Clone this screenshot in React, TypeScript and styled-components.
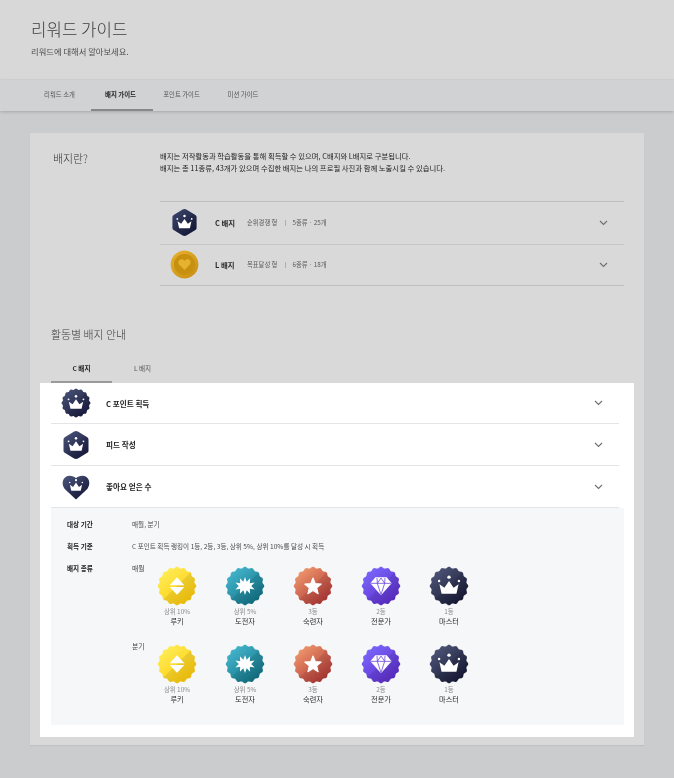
import React, { useId } from 'react'
import styled, { createGlobalStyle } from 'styled-components'

const GlobalStyle = createGlobalStyle`
  html, body {
    margin: 0;
    padding: 0;
    background: #cbccce;
  }
  body {
    font-family: "Noto Sans CJK KR", "Noto Sans", "Liberation Sans", sans-serif;
    color: #222;
  }
  * { box-sizing: border-box; }
`

const Page = styled.div`
  width: 674px;
  height: 778px;
  overflow: hidden;
  background: #cbccce;
  filter: blur(0.45px);
`

const TopHeader = styled.header`
  height: 80px;
  padding: 17px 31px 0;
  background: #d8d8d8;
  border-bottom: 1px solid #d3d3d3;
`

const PageTitle = styled.h1`
  margin: 0;
  font-size: 16.8px;
  line-height: 24px;
  font-weight: 300;
  color: #3b3b3b;
`

const PageSub = styled.p`
  margin: 3px 0 0;
  font-size: 8.3px;
  line-height: 14px;
  color: #4c4c4c;
`

const TabBar = styled.nav`
  height: 31px;
  padding-left: 28px;
  display: flex;
  background: #d1d2d4;
  box-shadow: 0 1px 3px rgba(0, 0, 0, 0.18);
`

const TopTab = styled.div<{ $active?: boolean; $w: number }>`
  width: ${p => p.$w}px;
  display: flex;
  align-items: center;
  justify-content: center;
  padding-right: ${p => (p.$active ? 3 : 0)}px;
  font-size: 6.4px;
  color: ${p => (p.$active ? '#1d1d1d' : '#555')};
  font-weight: ${p => (p.$active ? 700 : 400)};
  border-bottom: 2px solid ${p => (p.$active ? '#86888a' : 'transparent')};
`

const Card = styled.main`
  margin: 22px 30px 0;
  height: 612px;
  padding: 17px 10px 8px 10px;
  background: #d9d9d9;
  box-shadow: 0 1px 1px rgba(0, 0, 0, 0.05);
`

const Intro = styled.section`
  display: grid;
  grid-template-columns: 107px 464px;
  padding: 0 0 0 13px;
  height: 136px;
`

const IntroTitle = styled.h2`
  margin: 0;
  font-size: 10.9px;
  line-height: 16px;
  font-weight: 300;
  color: #333;
`

const IntroText = styled.p`
  margin: 0;
  font-size: 7.35px;
  line-height: 12px;
  color: #222;
`

const TypeList = styled.div`
  margin-top: 27px;
  border-top: 1px solid #bfbfbf;
  border-bottom: 1px solid #bfbfbf;
  grid-column: 2;
`

const TypeRow = styled.div`
  height: 41.5px;
  display: flex;
  align-items: center;
  padding: 0 16px 0 10px;
  & + & { border-top: 1px solid #c6c6c6; }
`

const TypeName = styled.strong`
  margin-left: 16px;
  width: 32px;
  font-size: 7.4px;
  font-weight: 700;
  color: #2a2a2a;
`

const TypeMeta = styled.span`
  font-size: 6.3px;
  color: #5a5a5a;
`

const MetaDivider = styled.i`
  width: 1px;
  height: 6px;
  margin: 0 6px 0 8px;
  background: #b0b0b0;
`

const Chevron = styled.svg`
  margin-left: auto;
  width: 9px;
  height: 6px;
  flex: none;
`

const SectionTitle = styled.h2`
  margin: 40px 0 0 11px;
  font-size: 10.9px;
  line-height: 16px;
  font-weight: 300;
  color: #3a3a3a;
`

const SubTabs = styled.div`
  display: flex;
  margin: 16px 10px 0 11px;
  height: 25px;
`

const SubTab = styled.div<{ $active?: boolean }>`
  width: 61px;
  padding-bottom: 3px;
  display: flex;
  align-items: center;
  justify-content: center;
  font-size: 6.6px;
  color: ${p => (p.$active ? '#1d1d1d' : '#555')};
  font-weight: ${p => (p.$active ? 700 : 400)};
  border-bottom: 2px solid ${p => (p.$active ? '#9a9a9a' : 'transparent')};
`

const Spotlight = styled.section`
  background: #fff;
  height: 354px;
  padding: 0 10px 0 11px;
`

const ActivityList = styled.div`
  margin-right: 5px;
`

const ActivityRow = styled.div`
  height: 42px;
  display: flex;
  align-items: center;
  padding: 0 16px 0 10px;
  border-bottom: 1.5px solid #e4e5e9;
  &:first-child { height: 41px; }
`

const ActivityName = styled.strong`
  margin-left: 15px;
  font-size: 7.6px;
  font-weight: 700;
  color: #222;
`

const Detail = styled.div`
  height: 217px;
  padding: 10px 0 0 16px;
  background: #f6f7f9;
`

const InfoRow = styled.div<{ $h: number }>`
  display: grid;
  grid-template-columns: 65px 1fr;
  min-height: ${p => p.$h}px;
  align-items: start;
`

const InfoLabel = styled.div`
  font-size: 6.6px;
  line-height: 12px;
  font-weight: 700;
  color: #222;
`

const InfoValue = styled.div`
  font-size: 6.6px;
  line-height: 12px;
  color: #4a4a4a;
`

const BadgeGroup = styled.div`
  display: grid;
  grid-template-columns: 11px repeat(5, 68px);
  height: 78px;
`

const Period = styled.div`
  font-size: 6.8px;
  line-height: 12px;
  white-space: nowrap;
  color: #444;
`

const BadgeItem = styled.div`
  padding-top: 4px;
  display: flex;
  flex-direction: column;
  align-items: center;
`

const BadgeCaption = styled.span`
  margin-top: 1px;
  font-size: 6.4px;
  line-height: 10px;
  color: #8a8a8a;
`

const BadgeName = styled.span`
  font-size: 7.2px;
  line-height: 9.5px;
  color: #2a2a2a;
`

type Glyph = 'rookie' | 'burst' | 'star' | 'gem' | 'crown' | 'heart'
type Shape = 'scallop' | 'hex' | 'heart' | 'coin'

const scallopPath = (bumps = 16, r = 22.2, amp = 0.9) => {
  const pts: string[] = []
  for (let i = 0; i < 192; i++) {
    const a = (i / 192) * Math.PI * 2
    const rad = r + amp * Math.cos(a * bumps)
    pts.push(`${(24 + rad * Math.cos(a)).toFixed(2)} ${(24 + rad * Math.sin(a)).toFixed(2)}`)
  }
  return `M${pts.join('L')}Z`
}

const shapes: Record<Shape, string> = {
  scallop: scallopPath(),
  hex: 'M24 1.5 Q25.5 1.5 27 2.5 L42 11.5 Q44 13 44 15 V33 Q44 35 42 36.5 L27 45.5 Q24 47 21 45.5 L6 36.5 Q4 35 4 33 V15 Q4 13 6 11.5 L21 2.5 Q22.5 1.5 24 1.5Z',
  heart: 'M24 44 L6 27 C0 20 2 7 13 6 C18 6 22 8 24 10 C26 8 30 6 35 6 C46 7 48 20 42 27Z',
  coin: 'M24 1a23 23 0 1 0 0.01 0Z',
}

const glyphScale: Record<Glyph, number> = {
  rookie: 0.8,
  burst: 0.68,
  star: 0.64,
  gem: 0.8,
  crown: 0.85,
  heart: 1,
}

const Glyphs: React.FC<{ kind: Glyph }> = ({ kind }) => {
  switch (kind) {
    case 'rookie':
      return (
        <g fill="#fff">
          <path d="M24 11 L35 23 H13Z" />
          <path d="M13 25.5 H35 L24 37Z" />
        </g>
      )
    case 'burst':
      return (
        <path
          fill="#fff"
          d="M24 8 L27 16.5 L33 10.5 L32.5 19 L41 18 L35 24 L41 30 L32.5 29 L33 37.5 L27 31.5 L24 40 L21 31.5 L15 37.5 L15.5 29 L7 30 L13 24 L7 18 L15.5 19 L15 10.5 L21 16.5Z"
        />
      )
    case 'star':
      return <path fill="#fff" stroke="#fff" strokeWidth="2" strokeLinejoin="round" d="M24 9 L28.4 19.6 L39.5 20.4 L31 27.6 L33.7 38.6 L24 32.6 L14.3 38.6 L17 27.6 L8.5 20.4 L19.6 19.6Z" />
    case 'gem':
      return (
        <g>
          <path fill="#fff" d="M15.5 11 H32.5 L40 20 L24 38 L8 20Z" />
          <path fill="none" stroke="#6a45d8" strokeWidth="1.2" d="M8.5 20 H39.5 M18 12 L18.5 20 L24 37 L29.5 20 L30 12 M18.5 20 L24 12 L29.5 20" />
        </g>
      )
    case 'crown':
      return (
        <g fill="#fff">
          <circle cx="24" cy="11.5" r="2.4" />
          <circle cx="10" cy="17" r="1.7" />
          <circle cx="38" cy="17" r="1.7" />
          <path d="M10.5 21.5 L17.5 26.5 L24 17 L30.5 26.5 L37.5 21.5 L34.5 35 H13.5Z" />
        </g>
      )
    case 'heart':
      return <path fill="#e5b32d" d="M24 33 L15.5 24.5 C12.5 21 14 16 18.5 15.5 C21 15.3 23 16.5 24 18 C25 16.5 27 15.3 29.5 15.5 C34 16 35.5 21 32.5 24.5Z" />
  }
}

const Badge: React.FC<{
  size: number
  shape: Shape
  glyph: Glyph
  from: string
  to: string
  ring?: string
}> = ({ size, shape, glyph, from, to, ring }) => {
  const id = useId().replace(/[^a-zA-Z0-9]/g, '')
  const scale = shape === 'heart' ? 0.72 : glyphScale[glyph]
  return (
    <svg width={size} height={size} viewBox="0 0 48 48" style={{ flex: 'none' }}>
      <defs>
        <linearGradient id={`g${id}`} x1="0.1" y1="0" x2="0.9" y2="1">
          <stop offset="0" stopColor={from} />
          <stop offset="1" stopColor={to} />
        </linearGradient>
        <clipPath id={`c${id}`}>
          <path d={shapes[shape]} />
        </clipPath>
      </defs>
      <path d={shapes[shape]} fill={`url(#g${id})`} />
      {ring ? (
        <circle cx="24" cy="24" r="17.5" fill={ring} />
      ) : (
        <path d="M0 48 L48 0 V48Z" fill="#000" opacity="0.08" clipPath={`url(#c${id})`} />
      )}
      <g transform={`translate(24 ${shape === 'heart' ? 22 : 24}) scale(${scale}) translate(-24 -24)`}>
        <Glyphs kind={glyph} />
      </g>
    </svg>
  )
}

const ChevronIcon = () => (
  <Chevron viewBox="0 0 9 6">
    <path d="M1 1 L4.5 4.5 L8 1" fill="none" stroke="#6e6e6e" strokeWidth="1.1" />
  </Chevron>
)

const navy = { from: '#4a5478', to: '#14163a' }

const tiers: { glyph: Glyph; from: string; to: string; caption: string; name: string }[] = [
  { glyph: 'rookie', from: '#fff060', to: '#fcc600', caption: '상위 10%', name: '루키' },
  { glyph: 'burst', from: '#49bcd4', to: '#0c6a7c', caption: '상위 5%', name: '도전자' },
  { glyph: 'star', from: '#f5a172', to: '#a92c30', caption: '3등', name: '숙련자' },
  { glyph: 'gem', from: '#7c6cff', to: '#5a26c4', caption: '2등', name: '전문가' },
  { glyph: 'crown', from: '#525a7c', to: '#12132f', caption: '1등', name: '마스터' },
]

const BadgeRow: React.FC<{ period: string }> = ({ period }) => (
  <BadgeGroup>
    <Period>{period}</Period>
    {tiers.map(t => (
      <BadgeItem key={t.name}>
        <Badge size={40} shape="scallop" glyph={t.glyph} from={t.from} to={t.to} />
        <BadgeCaption>{t.caption}</BadgeCaption>
        <BadgeName>{t.name}</BadgeName>
      </BadgeItem>
    ))}
  </BadgeGroup>
)

export default function App() {
  return (
    <Page>
      <GlobalStyle />
      <TopHeader>
        <PageTitle>리워드 가이드</PageTitle>
        <PageSub>리워드에 대해서 알아보세요.</PageSub>
      </TopHeader>
      <TabBar>
        <TopTab $w={63}>리워드 소개</TopTab>
        <TopTab $w={62} $active>배지 가이드</TopTab>
        <TopTab $w={57}>포인트 가이드</TopTab>
        <TopTab $w={66}>미션 가이드</TopTab>
      </TabBar>

      <Card>
        <Intro>
          <IntroTitle>배지란?</IntroTitle>
          <IntroText>
            배지는 저작활동과 학습활동을 통해 획득할 수 있으며, C배지와 L배지로 구분됩니다.
            <br />
            배지는 총 11종류, 43개가 있으며 수집한 배지는 나의 프로필 사진과 함께 노출시킬 수 있습니다.
          </IntroText>
          <TypeList>
            <TypeRow>
              <Badge size={29} shape="hex" glyph="crown" from="#3a4468" to="#14173a" />
              <TypeName>C 배지</TypeName>
              <TypeMeta>순위경쟁 형</TypeMeta>
              <MetaDivider />
              <TypeMeta>5종류 · 25개</TypeMeta>
              <ChevronIcon />
            </TypeRow>
            <TypeRow>
              <Badge size={29} shape="coin" glyph="heart" from="#e6b02e" to="#c98f14" ring="#c7900f" />
              <TypeName>L 배지</TypeName>
              <TypeMeta>목표달성 형</TypeMeta>
              <MetaDivider />
              <TypeMeta>6종류 · 18개</TypeMeta>
              <ChevronIcon />
            </TypeRow>
          </TypeList>
        </Intro>

        <SectionTitle>활동별 배지 안내</SectionTitle>
        <SubTabs>
          <SubTab $active>C 배지</SubTab>
          <SubTab>L 배지</SubTab>
        </SubTabs>

        <Spotlight>
          <ActivityList>
            <ActivityRow>
              <Badge size={30} shape="scallop" glyph="crown" {...navy} />
              <ActivityName>C 포인트 획득</ActivityName>
              <ChevronIcon />
            </ActivityRow>
            <ActivityRow>
              <Badge size={30} shape="hex" glyph="crown" {...navy} />
              <ActivityName>피드 작성</ActivityName>
              <ChevronIcon />
            </ActivityRow>
            <ActivityRow>
              <Badge size={30} shape="heart" glyph="crown" {...navy} />
              <ActivityName>좋아요 얻은 수</ActivityName>
              <ChevronIcon />
            </ActivityRow>
          </ActivityList>
          <Detail>
            <InfoRow $h={22}>
              <InfoLabel>대상 기간</InfoLabel>
              <InfoValue>매월, 분기</InfoValue>
            </InfoRow>
            <InfoRow $h={22}>
              <InfoLabel>획득 기준</InfoLabel>
              <InfoValue>C 포인트 획득 랭킹이 1등, 2등, 3등, 상위 5%, 상위 10%를 달성 시 획득</InfoValue>
            </InfoRow>
            <InfoRow $h={160}>
              <InfoLabel>배지 종류</InfoLabel>
              <div>
                <BadgeRow period="매월" />
                <BadgeRow period="분기" />
              </div>
            </InfoRow>
          </Detail>
        </Spotlight>
      </Card>
    </Page>
  )
}
